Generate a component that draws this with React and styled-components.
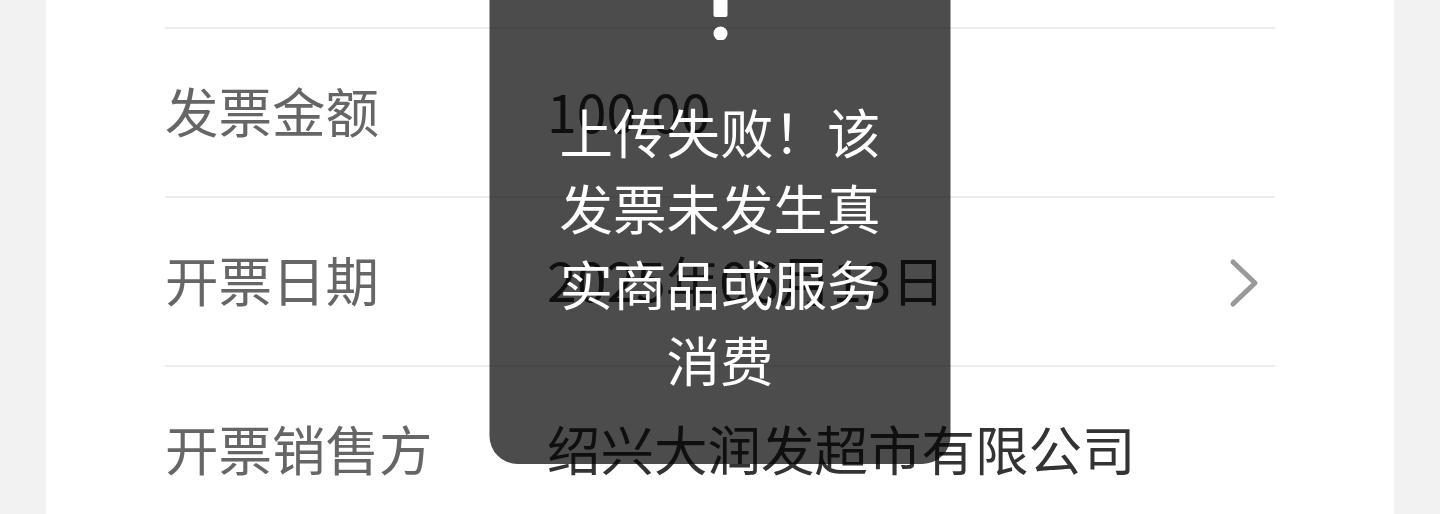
import React from "react";
import styled, { createGlobalStyle } from "styled-components";

const GlobalStyle = createGlobalStyle`
  html, body {
    margin: 0;
    padding: 0;
    background: #f2f2f2;
    font-family: "Noto Sans CJK SC", "Noto Sans", sans-serif;
  }
`;

const Screen = styled.div`
  position: relative;
  width: 1440px;
  height: 514px;
  overflow: hidden;
  background: #f2f2f2;
`;

const Card = styled.div`
  margin-left: 46px;
  width: 1348px;
  height: 100%;
  background: #ffffff;
  padding: 0 119px;
  box-sizing: border-box;
  display: flex;
  flex-direction: column;
`;

const TopSpacer = styled.div`
  height: 27px;
  flex: none;
`;

const Row = styled.div`
  flex: none;
  height: 167px;
  box-sizing: content-box;
  border-top: 2px solid #ededed;
  display: flex;
  align-items: center;
`;

const Label = styled.div`
  width: 382px;
  flex: none;
  font-size: 53.5px;
  color: #666666;
  line-height: 1;
  margin-bottom: 5px;
`;

const Value = styled.div`
  flex: 1;
  font-size: 53.5px;
  color: #333333;
  line-height: 1;
  white-space: nowrap;
  margin-bottom: 5px;
`;

const Chevron = styled.svg`
  flex: none;
  width: 30px;
  height: 50px;
  margin-right: 16px;
  margin-top: 2px;
`;

const Toast = styled.div`
  position: absolute;
  left: 50%;
  bottom: 50px;
  transform: translateX(-50%);
  width: 461px;
  box-sizing: border-box;
  padding: 0 0 67px;
  background: rgba(0, 0, 0, 0.7);
  border-radius: 28px;
  display: flex;
  flex-direction: column;
  align-items: center;
`;

const AlertIcon = styled.svg`
  display: block;
  width: 20px;
  height: 80px;
  margin-bottom: 53px;
`;

const ToastText = styled.div`
  width: 330px;
  font-size: 53.5px;
  line-height: 76px;
  color: #ffffff;
  text-align: center;
  word-break: break-all;
`;

export default function App() {
  return (
    <>
      <GlobalStyle />
      <Screen>
        <Card>
          <TopSpacer />
          <Row>
            <Label>发票金额</Label>
            <Value>100.00</Value>
          </Row>
          <Row>
            <Label>开票日期</Label>
            <Value>2025年06月13日</Value>
            <Chevron viewBox="0 0 30 50">
              <polyline
                points="4,4 26,25 4,46"
                fill="none"
                stroke="#999999"
                strokeWidth="5"
                strokeLinecap="round"
                strokeLinejoin="round"
              />
            </Chevron>
          </Row>
          <Row>
            <Label>开票销售方</Label>
            <Value>绍兴大润发超市有限公司</Value>
          </Row>
        </Card>
        <Toast>
          <AlertIcon viewBox="0 0 20 80">
            <rect x="3" y="0" width="14" height="57" rx="2" fill="#ffffff" />
            <circle cx="10" cy="73.5" r="7" fill="#ffffff" />
          </AlertIcon>
          <ToastText>上传失败！该发票未发生真实商品或服务消费</ToastText>
        </Toast>
      </Screen>
    </>
  );
}
